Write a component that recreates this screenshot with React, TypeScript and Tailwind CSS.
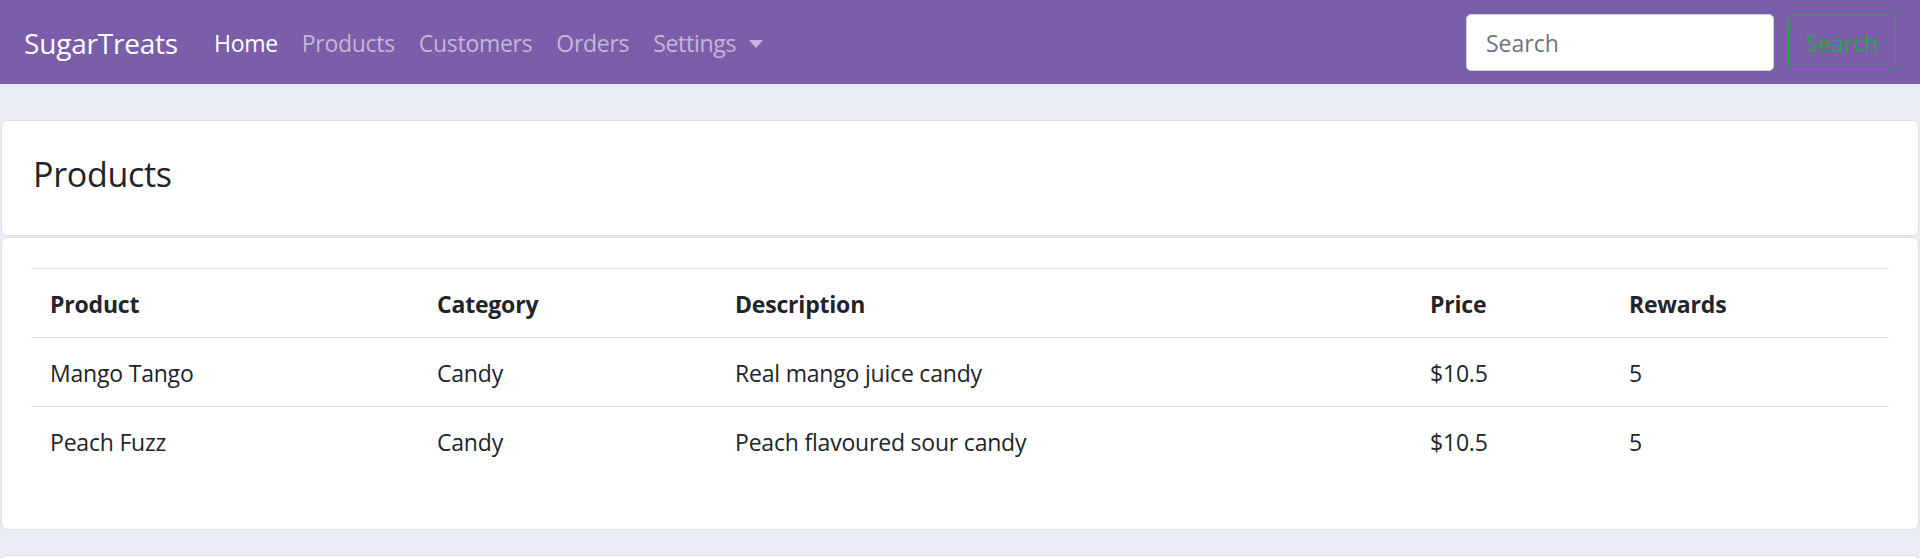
import { useState } from "react";

const products = [
  { name: "Mango Tango", category: "Candy", description: "Real mango juice candy", price: "$10.5", rewards: 5 },
  { name: "Peach Fuzz", category: "Candy", description: "Peach flavoured sour candy", price: "$10.5", rewards: 5 },
];

const links = ["Home", "Products", "Customers", "Orders"];

const Navbar = () => {
  const [query, setQuery] = useState("");

  return (
    <nav className="flex h-[84px] items-center justify-between bg-[#7a5ea9] px-[24px]">
      <div className="flex items-center pt-[2px]">
        <a className="mr-[24px] cursor-pointer text-[28px] leading-none tracking-[-0.2px] text-white">SugarTreats</a>
        {links.map((link, i) => (
          <a
            key={link}
            className={
              i === 0
                ? "cursor-pointer px-[12px] text-[23px] tracking-[-0.3px] text-white"
                : "cursor-pointer px-[12px] text-[23px] tracking-[-0.3px] text-[#c3b6d8]"
            }
          >
            {link}
          </a>
        ))}
        <a className="flex cursor-pointer items-center px-[12px] text-[23px] tracking-[-0.3px] text-[#c3b6d8]">
          Settings
          <span className="ml-[13px] mt-[2px] h-0 w-0 border-x-[7px] border-t-[8px] border-x-transparent border-t-[#c3b6d8]" />
        </a>
      </div>
      <form className="flex items-center gap-[14px]" onSubmit={(e) => e.preventDefault()}>
        <input
          value={query}
          onChange={(e) => setQuery(e.target.value)}
          placeholder="Search"
          className="h-[57px] w-[308px] rounded-[5px] border border-[#ced4da] bg-white px-[19px] pt-[2px] text-[23px] text-[#495057] outline-none placeholder:text-[#6c757d]"
        />
        <button className="h-[55px] w-[108px] rounded-[5px] border border-[#28a745] pt-[2px] text-[23px] text-[#28a745]">
          Search
        </button>
      </form>
    </nav>
  );
};

const App = () => {
  return (
    <div className="h-[558px] overflow-hidden bg-[#e9ecf4] font-['Open_Sans',sans-serif] text-[#212529]">
      <Navbar />
      <main className="mx-px pt-[36px]">
        <div className="flex h-[116px] items-center rounded-[6px] border border-[#dfdfdf] bg-white px-[31px]">
          <h4 className="mb-[7px] text-[34px] font-medium leading-tight tracking-[-0.3px]">Products</h4>
        </div>
        <div className="mt-px rounded-[6px] border border-[#dfdfdf] bg-white px-[29px] pt-[30px] pb-[53px]">
          <table className="w-full table-fixed border-collapse text-left text-[23px] tracking-[-0.2px]">
            <colgroup>
              <col className="w-[387px]" />
              <col className="w-[298px]" />
              <col className="w-[695px]" />
              <col className="w-[199px]" />
              <col />
            </colgroup>
            <thead>
              <tr className="h-[69px] border-y border-[#dee2e6]">
                <th className="px-[19px] pt-[3px] font-bold">Product</th>
                <th className="px-[19px] pt-[3px] font-bold">Category</th>
                <th className="px-[19px] pt-[3px] font-bold">Description</th>
                <th className="px-[19px] pt-[3px] font-bold">Price</th>
                <th className="px-[19px] pt-[3px] font-bold">Rewards</th>
              </tr>
            </thead>
            <tbody>
              {products.map((p) => (
                <tr key={p.name} className="h-[69px] border-t border-[#dee2e6] first:border-t-0">
                  <td className="px-[19px] pt-[2px]">{p.name}</td>
                  <td className="px-[19px] pt-[2px]">{p.category}</td>
                  <td className="px-[19px] pt-[2px]">{p.description}</td>
                  <td className="px-[19px] pt-[2px]">{p.price}</td>
                  <td className="px-[19px] pt-[2px]">{p.rewards}</td>
                </tr>
              ))}
            </tbody>
          </table>
        </div>
        <div className="mt-[25px] h-[40px] rounded-t-[6px] border border-[#dfdfdf] bg-white" />
      </main>
    </div>
  );
};

export default App;
